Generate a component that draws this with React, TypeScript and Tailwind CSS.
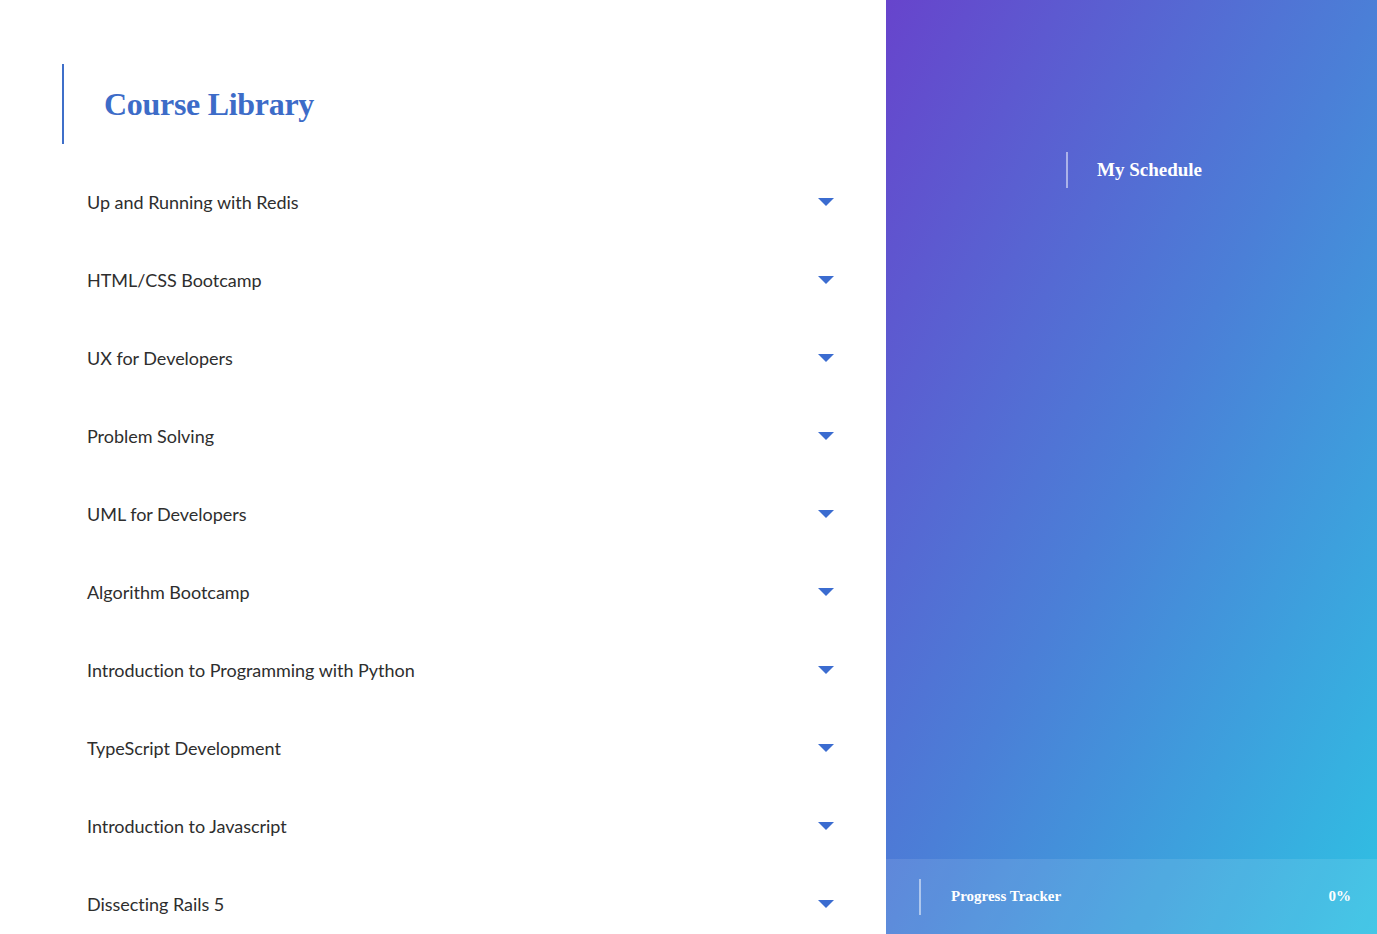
const courses = [
    "Up and Running with Redis",
    "HTML/CSS Bootcamp",
    "UX for Developers",
    "Problem Solving",
    "UML for Developers",
    "Algorithm Bootcamp",
    "Introduction to Programming with Python",
    "TypeScript Development",
    "Introduction to Javascript",
    "Dissecting Rails 5",
];

const serif = { fontFamily: '"Liberation Serif", "DejaVu Serif", serif' };

function App() {
    return (
        <div className="flex h-[934px] w-full overflow-hidden bg-white">
            <div className="flex-1 overflow-hidden">
                <div className="pt-16 pl-[62px]">
                    <div className="flex h-20 items-center border-l-2 border-[#3f6fc9] pl-[40px]">
                        <h1 className="text-[32px] font-bold text-[#3d6cc8] tracking-[-0.3px]" style={serif}>Course Library</h1>
                    </div>
                </div>
                <ul className="mt-[19px]" style={{ fontFamily: 'Lato, "Noto Sans", sans-serif' }}>
                    {courses.map((course, index) => (
                        <li key={index} className="flex h-[78px] items-center justify-between pl-[87px] pr-[52px]">
                            <span className="text-[18px] tracking-[-0.03px] text-[#2e2e2e]">{course}</span>
                            <span className="h-0 w-0 border-l-[8px] border-r-[8px] border-t-[8px] border-l-transparent border-r-transparent border-t-[#3b6cd0]"></span>
                        </li>
                    ))}
                </ul>
            </div>
            <div className="flex w-[491px] flex-col bg-linear-to-br/srgb from-[#6744cc] via-[#4b7fd7] to-[#2fc1e3]" style={serif}>
                <div className="flex-1 pt-[152px] pl-[180px]">
                    <div className="flex h-9 items-center border-l-2 border-white/50 pl-[29px]">
                        <span className="text-[19px] font-bold text-white">My Schedule</span>
                    </div>
                </div>
                <div className="flex h-[75px] items-center justify-between bg-white/10 pl-[33px] pr-[26px]">
                    <div className="flex h-9 items-center border-l-2 border-white/50 pl-[30px]">
                        <span className="text-[15px] font-bold text-white">Progress Tracker</span>
                    </div>
                    <span className="text-[15px] font-bold text-white">0%</span>
                </div>
            </div>
        </div>
    )
}

export default App
